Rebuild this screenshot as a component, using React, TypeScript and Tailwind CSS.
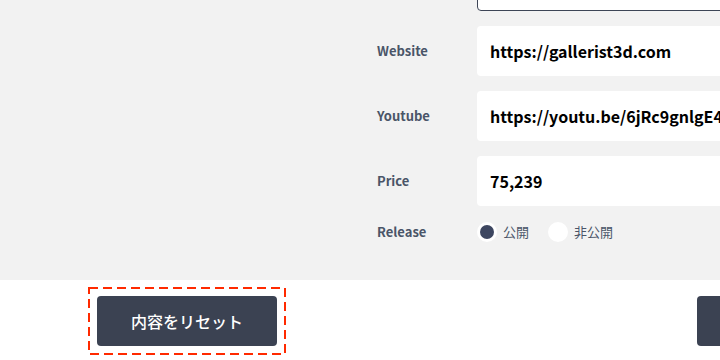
const font = { fontFamily: '"Noto Sans CJK JP", "Noto Sans", sans-serif' }

const Field = ({ label, value }: { label: string; value: string }) => (
    <div className="flex items-center h-[50px]">
        <div className="w-[100px] shrink-0 text-[13px] font-bold text-[#4a5568]">
            {label}
        </div>
        <div className="w-[400px] shrink-0 h-[50px] bg-white rounded-[4px] flex items-center pl-[13px] text-[16px] font-bold text-black whitespace-nowrap">
            {value}
        </div>
    </div>
)

const App = () => {
    return (
        <div className="w-[720px] h-[360px] overflow-hidden bg-white" style={font}>
            <div className="h-[280px] bg-[#f2f2f2] pl-[377px] flex flex-col overflow-hidden">
                <div className="flex flex-col gap-[15px] -mt-[40px]">
                    <div className="flex items-center h-[51px]">
                        <div className="w-[100px] shrink-0" />
                        <div className="w-[400px] shrink-0 h-[51px] bg-white rounded-[4px] border border-[#3d4556]" />
                    </div>

                    <Field label="Website" value="https://gallerist3d.com" />
                    <Field label="Youtube" value="https://youtu.be/6jRc9gnlgE4" />
                    <Field label="Price" value="75,239" />

                    <div className="flex items-center h-[20px] mt-[1px]">
                        <div className="w-[100px] shrink-0 text-[13px] font-bold text-[#4a5568]">
                            Release
                        </div>
                        <div className="flex items-center gap-[6px]">
                            <span className="w-[20px] h-[20px] rounded-full bg-white flex items-center justify-center">
                                <span className="w-[14px] h-[14px] rounded-full bg-[#3d4660]" />
                            </span>
                            <span className="text-[13px] text-[#4a5568]">公開</span>
                        </div>
                        <div className="flex items-center gap-[6px] ml-[19px]">
                            <span className="w-[20px] h-[20px] rounded-full bg-white" />
                            <span className="text-[13px] text-[#4a5568]">非公開</span>
                        </div>
                    </div>
                </div>
            </div>

            <div className="flex items-start pt-[7px]">
                <div className="relative ml-[88px] p-[9px]">
                    <svg className="absolute inset-0 w-full h-full" fill="none">
                        <rect x="1" y="1" width="196" height="66" stroke="#ff2a00" strokeWidth="2" strokeDasharray="9 5" />
                    </svg>
                    <button className="w-[180px] h-[50px] rounded-[4px] bg-[#3b4252] text-white text-[16px] font-medium">
                        内容をリセット
                    </button>
                </div>
                <button className="ml-auto mt-[9px] -mr-[157px] w-[180px] h-[50px] rounded-[4px] bg-[#3b4252] shrink-0" />
            </div>
        </div>
    )
}

export default App
